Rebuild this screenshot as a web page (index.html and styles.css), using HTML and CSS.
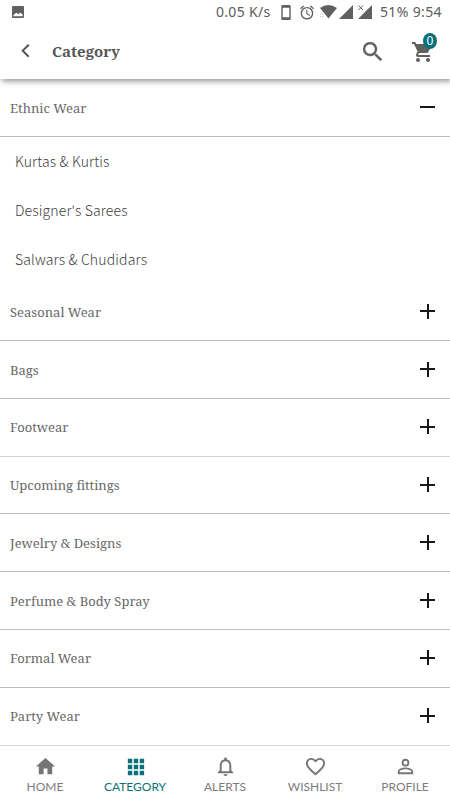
FILE: index.html
```html
<!DOCTYPE html>
<html lang="en">
<head>
<meta charset="utf-8">
<meta name="viewport" content="width=device-width, initial-scale=1">
<title>Category</title>
<link rel="stylesheet" href="styles.css">
</head>
<body>
<div class="app">
  <header class="top">
    <div class="status">
      <svg class="picture" viewBox="0 0 12 12"><path fill-rule="evenodd" d="M1 0h10q1 0 1 1v10q0 1-1 1H1q-1 0-1-1V1q0-1 1-1zM1.500 10.300h9.200V8.700L8.200 6.500 6.800 8.200 4.200 6.700 1.500 9z"/></svg>
      <span class="speed">0.05 K/s</span>
      <svg class="phone" viewBox="0 0 10 16"><path fill-rule="evenodd" d="M1 0h8q1 0 1 1v14q0 1-1 1H1q-1 0-1-1V1q0-1 1-1zM1.500 3v10h7V3z"/></svg>
      <svg class="alarm" viewBox="2 1.800 20 20.200"><path d="M22 5.720l-4.600-3.860-1.290 1.530 4.600 3.860L22 5.720zM7.880 3.390L6.600 1.860 2 5.710l1.290 1.530 4.590-3.850zM12.500 8H11v6l4.750 2.850.75-1.230-4-2.370V8zM12 4c-4.970 0-9 4.030-9 9s4.020 9 9 9a9 9 0 0 0 0-18zm0 16c-3.870 0-7-3.130-7-7s3.130-7 7-7 7 3.130 7 7-3.130 7-7 7z"/></svg>
      <svg class="wifi" viewBox="0 0 18 14"><path d="M1 3Q9-3 18 3L9.500 13.500z"/><path class="faint" d="M1 9h1v1H1zm2 0h1v1H3zm-2 2h1v1H1zm2 0h1v1H3z"/></svg>
      <svg class="signal" viewBox="0 0 14 14"><path d="M14 0v14H0z"/></svg>
      <svg class="signal second" viewBox="0 0 14 14"><path d="M14 0v14H0z"/><path class="halo" d="M0 0l6 6M6 0L0 6"/><path class="cross" d="M.5.500l4.500 4.500M5 .5L.5 5"/></svg>
      <span class="clock">51% 9:54</span>
    </div>
    <div class="toolbar">
      <svg class="back" viewBox="0 0 8 14"><path d="M7.200.8L1.200 6.800l6 6"/></svg>
      <h1>Category</h1>
      <svg class="search" viewBox="3 3 17.500 17.500"><path d="M15.500 14h-.79l-.28-.27A6.471 6.471 0 0 0 16 9.500 6.500 6.500 0 1 0 9.500 16c1.610 0 3.090-.59 4.230-1.570l.27.28v.79l5 4.990L20.490 19l-4.990-5zm-6 0C7.010 14 5 11.990 5 9.500S7.010 5 9.500 5 14 7.010 14 9.500 11.990 14 9.500 14z"/></svg>
      <div class="cart">
        <svg viewBox="1 2 21 20"><path d="M7 18c-1.100 0-1.990.9-1.990 2S5.900 22 7 22s2-.9 2-2-.9-2-2-2zM1 2v2h2l3.600 7.590-1.350 2.450c-.16.280-.25.610-.25.960 0 1.100.9 2 2 2h12v-2H7.420c-.14 0-.25-.11-.25-.25l.03-.12.9-1.630h7.450c.75 0 1.410-.41 1.750-1.030l3.580-6.490A1 1 0 0 0 20 4H5.210l-.94-2H1zm16 16c-1.100 0-1.990.9-1.990 2s.89 2 1.990 2 2-.9 2-2-.9-2-2-2z"/></svg>
        <span class="badge">0</span>
      </div>
    </div>
  </header>
  <main>
    <div class="row first"><span>Ethnic Wear</span><i class="sign minus"></i></div>
    <div class="sub">
      <span>Kurtas &amp; Kurtis</span>
      <span>Designer's Sarees</span>
      <span>Salwars &amp; Chudidars</span>
    </div>
    <div class="row"><span>Seasonal Wear</span><i class="sign"></i></div>
    <div class="row"><span>Bags</span><i class="sign"></i></div>
    <div class="row pale"><span>Footwear</span><i class="sign"></i></div>
    <div class="row"><span>Upcoming fittings</span><i class="sign"></i></div>
    <div class="row"><span>Jewelry &amp; Designs</span><i class="sign"></i></div>
    <div class="row"><span>Perfume &amp; Body Spray</span><i class="sign"></i></div>
    <div class="row"><span>Formal Wear</span><i class="sign"></i></div>
    <div class="row last"><span>Party Wear</span><i class="sign"></i></div>
  </main>
  <nav>
    <div class="tab"><svg viewBox="0 0 24 24"><path d="M10 20v-6h4v6h5v-8h3L12 3 2 12h3v8z"/></svg><span>HOME</span></div>
    <div class="tab active"><svg viewBox="0 0 24 24"><path d="M4 4h4.600v4.600H4zm6.200 0h4.600v4.600h-4.600zm6.200 0H21v4.600h-4.600zM4 10.200h4.600v4.600H4zm6.200 0h4.600v4.600h-4.600zm6.200 0H21v4.600h-4.600zM4 16.400h4.600V21H4zm6.200 0h4.600V21h-4.600zm6.200 0H21V21h-4.600z"/></svg><span>CATEGORY</span></div>
    <div class="tab"><svg viewBox="0 0 24 24"><path d="M12 22c1.100 0 2-.9 2-2h-4c0 1.100.9 2 2 2zm6-6v-5c0-3.070-1.630-5.640-4.500-6.320V4a1.500 1.500 0 0 0-3 0v.68C7.640 5.360 6 7.920 6 11v5l-2 2v1h16v-1l-2-2zm-2 1H8v-6c0-2.480 1.510-4.500 4-4.500s4 2.020 4 4.500v6z"/></svg><span>ALERTS</span></div>
    <div class="tab"><svg viewBox="0 0 24 24"><path d="M16.500 3c-1.740 0-3.410.81-4.500 2.090C10.910 3.810 9.240 3 7.500 3 4.420 3 2 5.420 2 8.500c0 3.780 3.400 6.860 8.550 11.540L12 21.350l1.450-1.320C18.600 15.360 22 12.280 22 8.500 22 5.420 19.580 3 16.500 3zm-4.400 15.550l-.1.100-.1-.1C7.140 14.240 4 11.390 4 8.500 4 6.500 5.500 5 7.500 5c1.540 0 3.040.99 3.570 2.360h1.870C13.460 5.990 14.960 5 16.500 5c2 0 3.500 1.500 3.500 3.500 0 2.890-3.140 5.740-7.900 10.050z"/></svg><span>WISHLIST</span></div>
    <div class="tab"><svg viewBox="0 0 24 24"><path d="M12 5.900a2.100 2.100 0 1 1 0 4.200 2.100 2.100 0 0 1 0-4.200m0 9c2.970 0 6.100 1.460 6.100 2.100v1.100H5.900V17c0-.64 3.130-2.100 6.100-2.100M12 4a4 4 0 1 0 0 8 4 4 0 0 0 0-8zm0 9c-2.670 0-8 1.340-8 4v3h16v-3c0-2.660-5.330-4-8-4z"/></svg><span>PROFILE</span></div>
  </nav>
</div>
</body>
</html>
```
FILE: styles.css
```css
* { box-sizing: border-box; }
body { margin: 0; background: #fff; color: #5c5c5c; }
svg { display: block; fill: #606060; flex: none; }
.app { width: 450px; height: 800px; display: flex; flex-direction: column; overflow: hidden; }

.top { height: 79px; flex: none; background: #fff; box-shadow: 2px 2px 6px rgba(0, 0, 0, .45); z-index: 1; }
.status { height: 24px; display: flex; align-items: center; padding: 0 8px 0 12px; font: 14px/24px "Noto Sans", sans-serif; white-space: nowrap; }
.picture { width: 12px; height: 12px; }
.speed { width: 65px; margin-left: 192px; letter-spacing: .3px; }
.phone { width: 10px; height: 15px; }
.alarm { width: 14px; height: 15px; margin-left: 9px; }
.wifi { width: 18px; height: 14px; margin-left: 5px; }
.signal { width: 14px; height: 14px; margin-left: 2px; }
.second { margin-left: 5px; overflow: visible; }
.faint { opacity: .35; }
.halo { fill: none; stroke: #fff; stroke-width: 2.500; }
.cross { fill: none; stroke: #606060; stroke-width: 1; }
.clock { margin-left: 8px; letter-spacing: .35px; }

.toolbar { height: 55px; display: flex; align-items: center; padding: 0 16px 0 21px; }
.back { width: 9px; height: 14px; margin-bottom: 1px; }
.back path { fill: none; stroke: #555; stroke-width: 2; }
h1 { flex: 1; margin: 0 0 1px 22px; font: bold 15px/22px "Noto Serif", serif; color: #555; }
.search { width: 19px; height: 19px; margin: 0 30px 1px 0; }
.search path { stroke: #606060; stroke-width: .3; }
.cart { position: relative; width: 22px; height: 22px; }
.cart svg { width: 21px; height: 22px; }
.badge { position: absolute; left: 11px; top: -8px; width: 14px; height: 16px; border-radius: 50%; background: #087078; color: #fff; font: 12px/16px "Noto Sans", sans-serif; text-align: center; }

main { flex: none; height: 666px; }
.row { height: 57.750px; display: flex; align-items: center; justify-content: space-between; padding: 0 15px 0 10px; border-bottom: 1px solid #bcbcbc; font: 13px/20px "Noto Serif", serif; color: #686868; }
.first { height: 58px; }
.pale { border-color: #d4d4d4; }
.last { border-color: transparent; }
.sign { width: 15px; height: 15px; margin-bottom: 1px; background: linear-gradient(#181818, #181818) center / 15px 2px no-repeat, linear-gradient(#181818, #181818) center / 2px 15px no-repeat; }
.minus { background: linear-gradient(#181818, #181818) center / 15px 2px no-repeat; }
.sub { height: 146.400px; display: grid; grid-template-rows: repeat(3, 48.700px); align-items: center; padding-left: 15px; font: 300 14px/20px "Noto Sans CJK SC", sans-serif; letter-spacing: .16px; color: #404040; }

nav { height: 55px; flex: none; display: grid; grid-template-columns: repeat(5, 90px); border-top: 1px solid #d4d4d4; background: #fff; }
.tab { display: flex; flex-direction: column; align-items: center; padding-top: 9px; font: 12px/16px Lato, sans-serif; color: #7c7c7c; }
.tab svg { width: 23px; height: 23px; margin-bottom: 1px; fill: #757575; }
.tab.active { color: #0c7278; }
.tab.active svg { fill: #0c7278; }
```
